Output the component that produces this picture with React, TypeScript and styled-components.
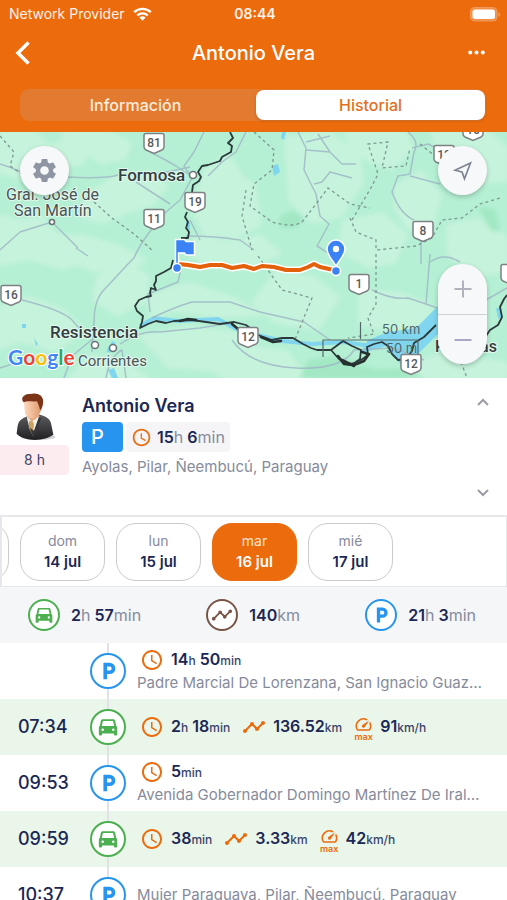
import React, { useState } from "react";
import styled, { createGlobalStyle } from "styled-components";
import { MdAccessTime, MdSettings, MdSpeed, MdTimeline } from "react-icons/md";

const color = {
  orange: "#ec6b0c",
  navy: "#1b2754",
  grey: "#868b9c",
  green: "#4caf50",
  blue: "#2795f0",
  brown: "#795548",
};

const GlobalStyle = createGlobalStyle`
  *, *::before, *::after { box-sizing: border-box; }
  body { margin: 0; background: #fff; }
  button { font: inherit; color: inherit; border: 0; padding: 0; background: none; cursor: pointer; }
`;

const Screen = styled.div`
  display: flex;
  flex-direction: column;
  height: 100vh;
  overflow: hidden;
  background: #fff;
  color: ${color.navy};
  font-family: Inter, "Liberation Sans", sans-serif;
`;

/* ---------- header ---------- */

const Header = styled.header`
  flex: none;
  background: ${color.orange};
  color: #fff;
  padding-bottom: 11px;
`;

const StatusBar = styled.div`
  display: grid;
  grid-template-columns: 1fr auto 1fr;
  align-items: center;
  height: 28px;
  padding: 0 6px 0 9px;
  font-size: 14px;
  line-height: 20px;
  color: #fff3ea;
`;

const Carrier = styled.span`
  display: flex;
  align-items: center;
  gap: 8px;
`;

const Clock = styled.time`
  font-weight: 600;
`;

const Battery = styled.span`
  display: flex;
  justify-content: flex-end;
`;

const TitleBar = styled.div`
  display: grid;
  grid-template-columns: 40px 1fr 40px;
  align-items: center;
  height: 49px;
  padding: 0 10px;
`;

const Title = styled.h1`
  margin: 0;
  text-align: center;
  font-size: 20px;
  line-height: 24px;
  font-weight: 500;
`;

const BarButton = styled.button<{ $end?: boolean }>`
  display: flex;
  align-items: center;
  justify-content: ${(p) => (p.$end ? "flex-end" : "flex-start")};
  height: 40px;
  padding: 0 ${(p) => (p.$end ? "12px" : "0")} 0 ${(p) => (p.$end ? "0" : "4px")};
`;

const Tabs = styled.div`
  display: grid;
  grid-template-columns: 1fr 1fr;
  gap: 6px;
  margin: 12px 21px 0 20px;
  padding: 1px;
  border-radius: 9px;
  background: #e27a30;
`;

const Tab = styled.button<{ $active: boolean }>`
  height: 30px;
  border-radius: 8px;
  font-size: 16px;
  font-weight: 500;
  color: ${(p) => (p.$active ? "#e36f1c" : "#ffeede")};
  background: ${(p) => (p.$active ? "#fff" : "transparent")};
  box-shadow: ${(p) => (p.$active ? "0 1px 3px rgba(0, 0, 0, 0.16)" : "none")};
`;

/* ---------- map ---------- */

const MapPanel = styled.section`
  position: relative;
  flex: none;
  height: 246px;
  overflow: hidden;
  background: #b8f0d5;
`;

const MapSvg = styled.svg`
  display: block;
  width: 100%;
  height: 100%;
`;

const MapTools = styled.div<{ $side: "left" | "right" }>`
  position: absolute;
  top: 14px;
  bottom: 14px;
  left: ${(p) => (p.$side === "left" ? "20px" : "auto")};
  right: ${(p) => (p.$side === "right" ? "20px" : "auto")};
  display: flex;
  flex-direction: column;
  justify-content: space-between;
`;

const RoundButton = styled.button`
  display: grid;
  place-items: center;
  width: 49px;
  height: 49px;
  border-radius: 50%;
  background: #f7f8fa;
  color: #8f95a3;
  box-shadow: 0 2px 5px rgba(0, 0, 0, 0.22);
`;

const ZoomGroup = styled.div`
  width: 49px;
  border-radius: 25px;
  overflow: hidden;
  background: #f7f8fa;
  box-shadow: 0 2px 5px rgba(0, 0, 0, 0.22);
`;

const ZoomButton = styled.button`
  display: grid;
  place-items: center;
  width: 100%;
  height: 50px;
  & + & {
    border-top: 1px solid #ced1d8;
  }
`;

/* ---------- person ---------- */

const Person = styled.section`
  flex: none;
  display: grid;
  grid-template-columns: 69px 1fr auto;
  column-gap: 13px;
  height: 137px;
  padding: 14px 12px 12px 0;
`;

const PersonSide = styled.div`
  display: flex;
  flex-direction: column;
  align-items: center;
  gap: 4px;
  padding: 1px 0 0;
`;

const Since = styled.span`
  align-self: stretch;
  border-radius: 0 4px 4px 0;
  background: #fdecef;
  text-align: center;
  font-size: 14px;
  line-height: 30px;
  color: #3b4263;
`;

const PersonName = styled.h2`
  margin: 0;
  font-size: 18px;
  line-height: 27px;
  font-weight: 600;
`;

const Chips = styled.div`
  display: flex;
  gap: 3px;
  margin: 3px 0 4px;
`;

const ParkChip = styled.span`
  width: 41px;
  height: 30px;
  padding-left: 9px;
  border-radius: 4px;
  background: ${color.blue};
  color: #fff;
  font-size: 20px;
  line-height: 30px;
  font-weight: 500;
`;

const TimeChip = styled.span`
  display: flex;
  align-items: center;
  gap: 5px;
  height: 30px;
  padding: 0 5px;
  border-radius: 4px;
  background: #f5f5f7;
  font-size: 16px;
`;

const Address = styled.p`
  margin: 0;
  overflow: hidden;
  white-space: nowrap;
  text-overflow: ellipsis;
  font-size: 15px;
  line-height: 22px;
  color: ${color.grey};
`;

const Steps = styled.div`
  display: flex;
  flex-direction: column;
  justify-content: space-between;
`;

const StepButton = styled.button`
  display: grid;
  place-items: center;
  width: 24px;
  height: 20px;
`;

/* ---------- days ---------- */

const DayStrip = styled.nav`
  flex: none;
  display: flex;
  height: 72px;
  overflow: hidden;
  border: 1px solid #e6e8ec;
  border-width: 2px 1px 1px 2px;
`;

const DayList = styled.div`
  display: flex;
  gap: 11px;
  align-items: center;
  margin-left: -78px;
`;

const Day = styled.button<{ $active: boolean }>`
  display: flex;
  flex-direction: column;
  align-items: center;
  justify-content: center;
  width: 85px;
  height: 58px;
  border: 1px solid ${(p) => (p.$active ? color.orange : "#c9cbd1")};
  border-radius: 20px;
  background: ${(p) => (p.$active ? color.orange : "#fff")};
  color: ${(p) => (p.$active ? "#fff" : color.navy)};
  font-size: 15px;
  line-height: 22px;
  font-weight: 600;
`;

const DayName = styled.span<{ $active: boolean }>`
  font-size: 14px;
  line-height: 20px;
  font-weight: 400;
  color: ${(p) => (p.$active ? "#ffe6d2" : color.grey)};
`;

/* ---------- totals ---------- */

const Totals = styled.section`
  flex: none;
  display: flex;
  align-items: center;
  justify-content: space-between;
  height: 56px;
  padding: 0 31px 0 28px;
  background: #f4f6f8;
`;

const Total = styled.div`
  display: flex;
  align-items: center;
  gap: 11px;
`;

const Ring = styled.span<{ $size: number; $color: string }>`
  flex: none;
  display: grid;
  place-items: center;
  width: ${(p) => p.$size}px;
  height: ${(p) => p.$size}px;
  border: 2px solid ${(p) => p.$color};
  border-radius: 50%;
  background: #fff;
  color: ${(p) => p.$color};
`;

const Value = styled.span`
  font-weight: 600;
  white-space: nowrap;
  line-height: 22px;
  font-size: 16px;
`;

const Unit = styled.span<{ $small?: boolean }>`
  font-weight: ${(p) => (p.$small ? 500 : 400)};
  font-size: ${(p) => (p.$small ? "12px" : "16px")};
  color: ${(p) => (p.$small ? "#3b4469" : color.grey)};
`;

/* ---------- timeline ---------- */

const Timeline = styled.ol`
  flex: 1;
  min-height: 0;
  margin: 0;
  padding: 0;
  list-style: none;
  overflow-y: auto;
  scrollbar-width: none;
`;

const Entry = styled.li<{ $moving: boolean }>`
  display: grid;
  grid-template-columns: 90px 36px 1fr;
  align-items: center;
  height: 56px;
  padding-right: 20px;
  background: ${(p) => (p.$moving ? "#eaf6ea" : "#fff")};
`;

const EntryTime = styled.time`
  padding-left: 18px;
  font-size: 18px;
  line-height: 24px;
  font-weight: 500;
`;

const Track = styled.div`
  display: flex;
  flex-direction: column;
  align-items: center;
  height: 100%;
`;

const TrackLine = styled.span`
  flex: 1;
  width: 2px;
  background: #dfe3e8;
`;

const EntryBody = styled.div`
  min-width: 0;
  padding-left: 11px;
`;

const Metrics = styled.div`
  display: flex;
  align-items: center;
  gap: 12px;
  padding-left: 3px;
`;

const Metric = styled.span`
  display: flex;
  align-items: center;
  gap: 7px;
`;

const MaxIcon = styled.span`
  display: flex;
  flex-direction: column;
  align-items: center;
  color: ${color.orange};
  font-size: 9px;
  line-height: 6px;
  font-weight: 600;
`;

/* ---------- drawings ---------- */

const CarIcon = ({ size }: { size: number }) => (
  <svg width={size} height={size} viewBox="0 0 24 24" aria-hidden="true">
    <path
      fill="currentColor"
      fillRule="evenodd"
      d="M6.200 3.500h11.600c1 0 1.700.6 1.900 1.500l1.300 6c.7.4 1 .9 1 1.700v7.600c0 .7-.4 1.100-1.100 1.100h-1.300c-.7 0-1.100-.4-1.100-1.100V19h-13v1.300c0 .7-.4 1.100-1.100 1.100H3.100c-.7 0-1.100-.4-1.100-1.100v-7.600c0-.8.3-1.300 1-1.700l1.300-6c.2-.9.900-1.500 1.900-1.500zm.3 1.900L5.200 10.800h13.600l-1.300-5.400zM6.200 13.600a1.400 1.400 0 1 0 0 2.800 1.400 1.400 0 0 0 0-2.800zm11.600 0a1.400 1.400 0 1 0 0 2.800 1.400 1.400 0 0 0 0-2.800z"
    />
  </svg>
);

const ParkingIcon = ({ size }: { size: number }) => (
  <svg width={size} height={size} viewBox="0 0 24 24" aria-hidden="true">
    <path d="M9 21V5h4.800a4.200 4.200 0 0 1 0 8.400H9" fill="none" stroke="currentColor" strokeWidth="4" />
  </svg>
);

const Chevron = ({ up }: { up?: boolean }) => (
  <svg width="14" height="10" viewBox="0 0 14 10" aria-hidden="true">
    <path d={up ? "M2 8l5-5 5 5" : "M2 2l5 5 5-5"} fill="none" stroke="#9a9ca3" strokeWidth="2" />
  </svg>
);

const Avatar = () => (
  <svg width="46" height="48" viewBox="-1 0 42 47" role="img" aria-label="Antonio Vera">
    <defs>
      <linearGradient id="skin" x1="0" x2="1">
        <stop offset="0" stopColor="#ffdcc0" />
        <stop offset="1" stopColor="#dd9466" />
      </linearGradient>
      <linearGradient id="suit" x1="0" y1="0" x2="0" y2="1">
        <stop offset="0" stopColor="#5d5d60" />
        <stop offset="1" stopColor="#202024" />
      </linearGradient>
    </defs>
    <ellipse cx="23" cy="43" rx="17" ry="3" fill="#000" opacity="0.18" />
    <path d="M3 32c1-5 4-7 9-9l12-2c7 2 11 4 12 10l2 10c-4 3-11 5-18 5-8 0-14-2-18-6z" fill="url(#suit)" />
    <path d="M12 24l3-3 9 1 1 3-6 16-5-9z" fill="#f1eee8" />
    <path d="M14 28l3-1 2 3-1 12-4-8z" fill="#c9a45e" />
    <path d="M13 18l9-2 2 7-7 5-4-4z" fill="#e5a67c" />
    <path d="M9 7c0-3 4-5 9-5 6 0 9 3 9 8 0 8-4 14-9 15-4 0-8-3-8-7z" fill="url(#skin)" />
    <path d="M8 8c-2-4 2-7 7-7 7-2 13 1 13 7 0 4-1 7-3 9l-1-4-2-5c-5 1-9-1-13 1z" fill="#7c3418" />
    <path d="M24 23l2 2-7 18h-1l-3-9 4 3z" fill="#37373a" />
  </svg>
);

type ShieldProps = { x: number; y: number; n: string };

const Shield = ({ x, y, n }: ShieldProps) => (
  <g transform={`translate(${x} ${y})`}>
    <path
      d="M-8-9.500H8q2 0 2 2V4q0 2-2 3L0 10.500-8 7q-2-1-2-3V-7.500q0-2 2-2z"
      fill="#fff"
      stroke="#7d8184"
      strokeWidth="1.500"
    />
    <text y="4" textAnchor="middle" fontFamily="Roboto, sans-serif" fontSize="12" fontWeight="500" fill="#55595c">
      {n}
    </text>
  </g>
);

const lightPatches = [
  "M0 132h34l14 14 22-4 20 8-10 14-30 2-22 14-28-8z",
  "M64 132h46l20 12-6 14-22 4-18-10-24 4z",
  "M86 196l28-18 38-4 14 12-14 18-26 8-22 10-22-6z",
  "M0 216l18 6 24-4 12 16 24 4 10 20-24 10-36-10-28 6z",
  "M60 240l22-4 40 12 22 12-18 14-32-4-22-8z",
  "M206 170l22-14 14 22 12 8 6 38-26 14-28-4-12-24z",
  "M196 236l34 8 30-8 20 18-34 14-32-2-22-10z",
  "M286 138l42-6 30 22 4 28-22 34-28 6-22-22z",
  "M346 132h58l8 16-20 20-18-6-22-12z",
  "M396 186l24-14 20 24-8 26-24 6-12-20z",
  "M432 132h56l19 18v30l-28 2-22-18-18-12z",
  "M344 222l38-8 24 22-12 26-26 4-28-16z",
  "M276 272l38 6 24 20-20 30-42-6-22-20z",
  "M360 290l38 4 30 10 8 20-34 8-42-8z",
  "M98 278l30-12 20 10-4 26-26 12-24-14z",
  "M0 308l28-10 34 12 22 22-30 18-34-10-20 8z",
  "M150 296l38-12 44 14 30 16-42 2-44-6-24 6z",
  "M142 336l46-8 50 6 20 20-40 16-50-4z",
  "M240 346l46 6 20 26h-80l-20-12z",
  "M410 366l34-12 63 10v14h-96z",
  "M448 226l30-6 29 18v32l-34 6-24-22z",
  "M90 356l36 8 20 14H70z",
];

const deepPatches = [
  "M280 216l14-6 10 8-8 10-16 0z",
  "M308 360l28-4 40 14 34-2 14 10H300z",
  "M478 206l18 4 4 22-10-2z",
];

const roads = [
  "M0 164q20 6 34 16M66 177q40 2 52-2l44-2 28-6",
  "M204 132l-10 20-10 14 8 12-12 22-14 12-18 22q-10 14-14 24l-6 6-26 28q-8 10-8 30l-2 30",
  "M150 152q16 8 26 14l12 8M136 182l34 22M246 132l-10 20-14 10-14 14",
  "M186 236q30 0 54 4l14 10M190 220l10 20M0 250l20-18 32-10M54 224l24 24",
  "M22 300q40 10 50 20l12 14M120 344q20-14 40-12l40-4 36-6",
  "M106 378q4-22 16-28l4 28M64 378l8-22 22-18",
  "M150 312l-2-18 30-12 4-18M152 318q20-10 40-16l38 0 30 10 44 10 26 18",
  "M298 132l8 16-2 22 12 24 4 22 9 8-12 22 16 10",
  "M318 134l12 18 12 12h14M306 142l24-6M306 150l24 2M314 184l8-2 8-10 22 6",
  "M408 132q12 10 6 20l-4 22-12 2-6 16q8 22 22 28M410 176l30 8M412 148l16-4 12 6",
  "M421 240v24M372 290q20 10 36 8l24 8M430 254l-4 50 34 12M430 262q14-10 30 0M486 300l21-12",
  "M232 340q18 26 64 28t58-18l40-2 30 12",
  "M0 368l18-6M88 256l-12-8",
];

const borders = [
  "M0 136l14 16-4 14 12 8",
  "M94 202l18 16 22 16 20 18",
  "M254 132l20 18-2 20-18 14-4 22 22 16q20 6 30 0l14-18 12-16 22 16 20 4",
  "M352 220l20-34 6-12-10-30 20-2-6 26 24-2 4-18",
  "M350 218l6 14 20 8v10l40-4 16-8 10-18 20-2 18-14 20-6",
  "M376 254v50l-8 14 6 16-26 4M258 256l24 34 30 8-18 44",
  "M246 190l-4 26 10 34M420 144l20 16M461 362l6 16",
];

const route =
  "M178 264l10 1 12 2 10-2 12 0 10 3 12-2 10 3 8-3 12 1 12 3 14 0 8-3 6-3 6 3 14 3";

const MapDrawing = () => (
  <MapSvg viewBox="0 132 507 246" preserveAspectRatio="xMidYMid slice" role="img" aria-label="Mapa del recorrido">
    <defs>
      <filter id="soften">
        <feGaussianBlur stdDeviation="2" />
      </filter>
    </defs>
    <rect x="-400" y="0" width="1400" height="600" fill="#b5f0d4" />
    <g filter="url(#soften)">
      <g fill="#c6f3db" stroke="#c6f3db" strokeWidth="4" strokeLinejoin="round">
        {lightPatches.map((d) => (
          <path key={d} d={d} />
        ))}
      </g>
      <g fill="#a2e8c4">
        {deepPatches.map((d) => (
          <path key={d} d={d} />
        ))}
      </g>
    </g>

    <g fill="#7fd6ee">
      <path d="M368 340l20-8 28-4 14-14 8-8v28l-18 18-20 12-14-18-26 8z" />
      <path d="M272 166l6-2 2 8-6 4zM282 132l4 0-2 8-3-2z" />
      <path d="M22 324l4 0 0 4-4 0zM34 338l4 6-2 2zM108 370l6-2 4 10h-6z" />
    </g>
    <g fill="none" stroke="#7fd6ee" strokeWidth="4">
      <path d="M140 326l14-8 24 3 40-2 22 12M258 335l24 6 30 3 32-2 26 4M114 342l-6 10" />
      <path d="M498 308l2 10M188 222v8" />
    </g>

    <g fill="none" stroke="#9fb9c6" strokeWidth="1.500" strokeLinejoin="round" opacity="0.850">
      {roads.map((d) => (
        <path key={d} d={d} />
      ))}
    </g>
    <g fill="none" stroke="#7c9a8e" strokeWidth="1.300" strokeDasharray="3 3">
      {borders.map((d) => (
        <path key={d} d={d} />
      ))}
    </g>

    <g fill="none" stroke="#2c3a3c" strokeWidth="1.800" strokeLinejoin="round">
      <path d="M230 132l3 6-5 5 4 3-1 6-9 5-2 4-12 4-6 1-4 6 3 5-2 4-6 4-1 7M187 212l-2 5 3 5-2 6 3 4-1 6h-7" />
      <path d="M173 260l-2 8-7 4-8 4v5l-2 4 2 5-5-2-1 5 1 3-5 1-7 3-4 6 2 5 6 5-1 6-2 6 8-4 8-3 10 2 8-2 18-1 14 2 14 2 14-2 12 3 8 6" />
      <path d="M258 335l14 5 10-2 11 0 10 6 8 4 6 2h14l12-9 9 5 9 4-1 9-7 5-7-1M331 350l8 9 10 6 12-5 7-5-1-8 7-3 8-2 6 4 4 8 6 6 8-1 6-8 2-8 10-6 12-12" />
      <path d="M480 342l6-6 4-6 8-5 4-8-2-10 4-8 3-4" />
    </g>
    <g fill="none" stroke="#26302f" strokeWidth="2.600" strokeLinecap="round" strokeLinejoin="round">
      <path d="M180 321l8-2 8 1M232 324l6 5M261 337l12 5 8-1M338 356l6 8 10 1 10-4 5-7M342 360l12 6M362 352l6 2" />
    </g>

    <Shield x={154} y={143} n="81" />
    <Shield x={195} y={202} n="19" />
    <Shield x={154} y={219} n="11" />
    <Shield x={11} y={295} n="16" />
    <Shield x={248} y={337} n="12" />
    <Shield x={359} y={284} n="1" />
    <Shield x={423} y={231} n="8" />
    <Shield x={411} y={364} n="12" />
    <Shield x={444} y={155} n="12" />
    <Shield x={473} y={130} n="16" />
    <Shield x={511} y={274} n="" />

    <g fill="#fff" stroke="#6b7375" strokeWidth="1.600">
      <circle cx="193" cy="175" r="3.500" />
      <circle cx="52" cy="222" r="2.500" />
      <circle cx="95" cy="345" r="3.500" />
      <circle cx="113" cy="348" r="3.500" />
    </g>

    <g
      fontFamily='Roboto, "Liberation Sans", sans-serif'
      fill="#4a5356"
      stroke="#e3f9ee"
      strokeWidth="2"
      strokeLinejoin="round"
      paintOrder="stroke"
    >
      <text x="118" y="181" fontSize="17" fontWeight="500" fill="#343d40">Formosa</text>
      <text x="6" y="200" fontSize="16">Gral. José de</text>
      <text x="14" y="216" fontSize="16">San Martín</text>
      <text x="50" y="338" fontSize="17" fontWeight="500" fill="#343d40">Resistencia</text>
      <text x="78" y="366" fontSize="15">Corrientes</text>
      <text x="435" y="352" fontSize="16" fontWeight="500" fill="#343d40">Posadas</text>
    </g>

    <g fill="none" stroke="#55686a" strokeWidth="1.200">
      <path d="M323 357v-17h95v14M360.500 322v17" />
    </g>
    <g fontFamily="Inter, sans-serif" fontSize="13" fill="#4f6569">
      <text x="382" y="334">50 km</text>
      <text x="386" y="353">50 m</text>
    </g>

    <text
      x="8"
      y="365"
      fontFamily='Lato, "Open Sans", sans-serif'
      fontSize="21"
      fontWeight="700"
      stroke="#fff"
      strokeWidth="2"
      paintOrder="stroke"
    >
      <tspan fill="#4285f4">G</tspan>
      <tspan fill="#ea4335">o</tspan>
      <tspan fill="#fbbc05">o</tspan>
      <tspan fill="#4285f4">g</tspan>
      <tspan fill="#34a853">l</tspan>
      <tspan fill="#ea4335">e</tspan>
    </text>

    <g fill="none" strokeLinecap="round" strokeLinejoin="round">
      <path d={route} stroke="#fff" strokeWidth="7" />
      <path d={route} stroke="#e5600a" strokeWidth="4" />
    </g>
    <g fill="#3b82f6" stroke="#fff" strokeWidth="1.500">
      <path d="M175.500 239.500h9l1.500 2h8.500V255H186l-1.500-2h-6v13h-3z" />
      <path d="M336 266c-4-7-9-11-9-17a9 9 0 0 1 18 0c0 6-5 10-9 17z" />
      <circle cx="177" cy="268" r="4.500" />
      <circle cx="336" cy="271" r="4.500" />
    </g>
    <circle cx="336" cy="249" r="3.200" fill="#fff" />
  </MapSvg>
);

/* ---------- data ---------- */

type Part = [value: string, unit: string];

const days = [
  ["sáb", "13 jul"],
  ["dom", "14 jul"],
  ["lun", "15 jul"],
  ["mar", "16 jul"],
  ["mié", "17 jul"],
];

type Stop = { time: string; duration?: Part[]; distance?: Part[]; speed?: Part[]; place?: string };

const stops: Stop[] = [
  { time: "", duration: [["14", "h"], ["50", "min"]], place: "Padre Marcial De Lorenzana, San Ignacio Guazú, Misiones, Paraguay" },
  { time: "07:34", duration: [["2", "h"], ["18", "min"]], distance: [["136.52", "km"]], speed: [["91", "km/h"]] },
  { time: "09:53", duration: [["5", "min"]], place: "Avenida Gobernador Domingo Martínez De Irala, Pilar, Paraguay" },
  { time: "09:59", duration: [["38", "min"]], distance: [["3.33", "km"]], speed: [["42", "km/h"]] },
  { time: "10:37", place: "Mujer Paraguaya, Pilar, Ñeembucú, Paraguay" },
];

const Amount = ({ parts, small }: { parts: Part[]; small?: boolean }) => (
  <Value>
    {parts.map(([value, unit], i) => (
      <React.Fragment key={unit}>
        {i > 0 && " "}
        {value}
        <Unit $small={small}>{unit}</Unit>
      </React.Fragment>
    ))}
  </Value>
);

export default function App() {
  const [tab, setTab] = useState("Historial");
  const [day, setDay] = useState("16 jul");

  return (
    <>
      <GlobalStyle />
      <Screen>
        <Header>
          <StatusBar>
            <Carrier>
              Network Provider
              <svg width="19" height="14" viewBox="0 0 19 14" aria-hidden="true">
                <g fill="none" stroke="#fff" strokeWidth="2.400">
                  <path d="M1.200 5.200a12 12 0 0 1 16.600 0" />
                  <path d="M4.300 8.500a7.500 7.500 0 0 1 10.400 0" />
                </g>
                <path d="M9.500 13.800L6.400 10.600a4.500 4.500 0 0 1 6.200 0z" fill="#fff" />
              </svg>
            </Carrier>
            <Clock>08:44</Clock>
            <Battery>
              <svg width="31" height="15" viewBox="0 0 31 15" aria-hidden="true">
                <rect x="0.500" y="0.500" width="26.500" height="13.500" rx="4" fill="#f08f49" stroke="#f29a5c" />
                <rect x="2.500" y="2.500" width="22.500" height="9.500" rx="2.500" fill="#fff" />
                <path d="M28.500 5a3 3 0 0 1 0 5z" fill="#f5a770" />
              </svg>
            </Battery>
          </StatusBar>
          <TitleBar>
            <BarButton aria-label="Atrás">
              <svg width="18" height="26" viewBox="0 0 18 26" aria-hidden="true">
                <path d="M14.500 2.500L4 13l10.500 10.500" fill="none" stroke="#fff" strokeWidth="3.500" />
              </svg>
            </BarButton>
            <Title>Antonio Vera</Title>
            <BarButton $end aria-label="Más opciones">
              <svg width="17" height="5" viewBox="0 0 17 5" fill="#fff" aria-hidden="true">
                <circle cx="2.200" cy="2.500" r="2" />
                <circle cx="8.500" cy="2.500" r="2" />
                <circle cx="14.800" cy="2.500" r="2" />
              </svg>
            </BarButton>
          </TitleBar>
          <Tabs role="tablist">
            {["Información", "Historial"].map((name) => (
              <Tab key={name} role="tab" aria-selected={tab === name} $active={tab === name} onClick={() => setTab(name)}>
                {name}
              </Tab>
            ))}
          </Tabs>
        </Header>

        <MapPanel>
          <MapDrawing />
          <MapTools $side="left">
            <RoundButton aria-label="Ajustes del mapa">
              <MdSettings size={29} />
            </RoundButton>
          </MapTools>
          <MapTools $side="right">
            <RoundButton aria-label="Centrar">
              <svg width="20" height="20" viewBox="0 0 20 20" aria-hidden="true">
                <path d="M17.500 2L2 9.200l7 1.800 2.500 6.800z" fill="none" stroke="#7e8492" strokeWidth="1.700" />
              </svg>
            </RoundButton>
            <ZoomGroup>
              <ZoomButton aria-label="Acercar">
                <svg width="18" height="18" viewBox="0 0 18 18" aria-hidden="true">
                  <path d="M9 0.500v17M0.500 9h17" stroke="#b0b3bb" strokeWidth="2" />
                </svg>
              </ZoomButton>
              <ZoomButton aria-label="Alejar">
                <svg width="18" height="18" viewBox="0 0 18 18" aria-hidden="true">
                  <path d="M0.500 9h17" stroke="#a9a8c4" strokeWidth="2" />
                </svg>
              </ZoomButton>
            </ZoomGroup>
          </MapTools>
        </MapPanel>

        <Person>
          <PersonSide>
            <Avatar />
            <Since>8 h</Since>
          </PersonSide>
          <div>
            <PersonName>Antonio Vera</PersonName>
            <Chips>
              <ParkChip>P</ParkChip>
              <TimeChip>
                <MdAccessTime size={21} color={color.orange} />
                <Amount parts={[["15", "h"], ["6", "min"]]} />
              </TimeChip>
            </Chips>
            <Address>Ayolas, Pilar, Ñeembucú, Paraguay</Address>
          </div>
          <Steps>
            <StepButton aria-label="Anterior">
              <Chevron up />
            </StepButton>
            <StepButton aria-label="Siguiente">
              <Chevron />
            </StepButton>
          </Steps>
        </Person>

        <DayStrip aria-label="Días">
          <DayList>
            {days.map(([name, date]) => (
              <Day key={date} $active={date === day} aria-pressed={date === day} onClick={() => setDay(date)}>
                <DayName $active={date === day}>{name}</DayName>
                {date}
              </Day>
            ))}
          </DayList>
        </DayStrip>

        <Totals>
          <Total>
            <Ring $size={32} $color={color.green}>
              <CarIcon size={20} />
            </Ring>
            <Amount parts={[["2", "h"], ["57", "min"]]} />
          </Total>
          <Total>
            <Ring $size={32} $color={color.brown}>
              <MdTimeline size={22} />
            </Ring>
            <Amount parts={[["140", "km"]]} />
          </Total>
          <Total>
            <Ring $size={32} $color={color.blue}>
              <ParkingIcon size={20} />
            </Ring>
            <Amount parts={[["21", "h"], ["3", "min"]]} />
          </Total>
        </Totals>

        <Timeline>
          {stops.map((stop) => {
            const moving = Boolean(stop.distance);
            return (
              <Entry key={stop.time} $moving={moving}>
                <EntryTime>{stop.time}</EntryTime>
                <Track>
                  <TrackLine />
                  <Ring $size={36} $color={moving ? color.green : color.blue}>
                    {moving ? <CarIcon size={22} /> : <ParkingIcon size={22} />}
                  </Ring>
                  <TrackLine />
                </Track>
                <EntryBody>
                  {stop.duration && (
                    <Metrics>
                      <Metric>
                        <MdAccessTime size={24} color={color.orange} />
                        <Amount small parts={stop.duration} />
                      </Metric>
                      {stop.distance && (
                        <Metric>
                          <MdTimeline size={24} color={color.orange} />
                          <Amount small parts={stop.distance} />
                        </Metric>
                      )}
                      {stop.speed && (
                        <Metric>
                          <MaxIcon>
                            <MdSpeed size={19} />
                            max
                          </MaxIcon>
                          <Amount small parts={stop.speed} />
                        </Metric>
                      )}
                    </Metrics>
                  )}
                  {stop.place && <Address>{stop.place}</Address>}
                </EntryBody>
              </Entry>
            );
          })}
        </Timeline>
      </Screen>
    </>
  );
}
